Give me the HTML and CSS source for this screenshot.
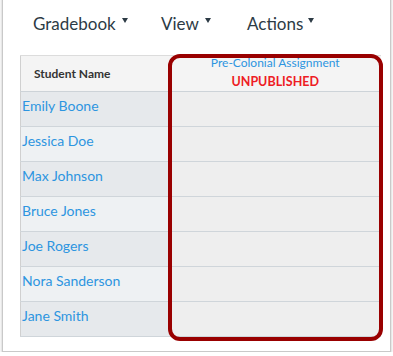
FILE: index.html
```html
<!DOCTYPE html>
<html>
<head>
  <meta charset="utf-8">
  <title>Gradebook</title>
  <link rel="stylesheet" href="styles.css">
</head>
<body>
  <div class="window">
    <div class="menu">
      <span class="menu-item gradebook">Gradebook <span class="caret"></span></span>
      <span class="menu-item view">View <span class="caret"></span></span>
      <span class="menu-item actions">Actions<span class="caret"></span></span>
    </div>

    <div class="grid">
      <table>
        <tr class="head">
          <th class="name-col">Student Name</th>
          <th class="grade-col">
            <div class="assignment">Pre-Colonial Assignment</div>
            <div class="unpublished">UNPUBLISHED</div>
          </th>
        </tr>
        <tr class="dark"><td class="name"><a href="#">Emily Boone</a></td><td class="grade"></td></tr>
        <tr class="light"><td class="name"><a href="#">Jessica Doe</a></td><td class="grade"></td></tr>
        <tr class="dark"><td class="name"><a href="#">Max Johnson</a></td><td class="grade"></td></tr>
        <tr class="light"><td class="name"><a href="#">Bruce Jones</a></td><td class="grade"></td></tr>
        <tr class="dark"><td class="name"><a href="#">Joe Rogers</a></td><td class="grade"></td></tr>
        <tr class="light"><td class="name"><a href="#">Nora Sanderson</a></td><td class="grade"></td></tr>
        <tr class="dark"><td class="name"><a href="#">Jane Smith</a></td><td class="grade"></td></tr>
      </table>
      <div class="highlight"></div>
    </div>
  </div>
</body>
</html>
```

FILE: styles.css
```css
body {
  margin: 0;
  background: #fff;
  font-family: Lato, "Open Sans", sans-serif;
}

.window {
  margin: -10px 0 0 2px;
  width: 387px;
  height: 360px;
  border: 1px solid #c9c9c9;
  box-shadow: 0 2px 3px rgba(0, 0, 0, 0.25);
  background: #fff;
}

.menu {
  display: flex;
  align-items: center;
  height: 44px;
  margin-top: 10px;
  padding-left: 30px;
  font-size: 17px;
  color: #2d3b45;
}

.menu-item {
  display: flex;
  align-items: center;
}

.gradebook { width: 128px; }
.view { width: 86px; }

.caret {
  display: inline-block;
  width: 0;
  height: 0;
  margin-left: 6px;
  margin-bottom: 5px;
  border-left: 3.5px solid transparent;
  border-right: 3.5px solid transparent;
  border-top: 5px solid #2d3b45;
}

.actions .caret { margin-left: 5px; }

.grid {
  position: relative;
  margin: 10px 0 0 17px;
  width: 361px;
}

table {
  border-collapse: collapse;
  width: 361px;
  table-layout: fixed;
}

th, td {
  padding: 0;
  box-sizing: border-box;
}

tr.head th {
  height: 36px;
  background: #f4f4f4;
  border-top: 1px solid #dcdcdc;
  border-bottom: 1px solid #cdd3d8;
  vertical-align: middle;
}

.name-col {
  width: 149px;
  border-left: 1px solid #d0d0d0;
  text-align: left;
  padding-left: 13px;
  font-size: 12px;
  font-weight: bold;
  color: #333;
}

.grade-col {
  text-align: center;
  font-weight: normal;
}

.assignment {
  font-size: 12px;
  color: #2d95e0;
  margin-top: -4px;
}

.unpublished {
  margin-top: 4px;
  font-size: 12.5px;
  font-weight: bold;
  color: #ee1c25;
}

td {
  height: 35px;
  border-bottom: 1px solid #cfd5da;
  vertical-align: top;
}

td.name {
  border-left: 1px solid #d0d0d0;
  padding: 5px 0 0 1px;
  font-size: 14px;
}

td.name a {
  color: #2d95e0;
  text-decoration: none;
}

tr.dark td.name { background: #e6e9ec; }
tr.light td.name { background: #eef1f3; }

td.grade {
  background: #eeeeee;
}

.highlight {
  position: absolute;
  left: 148px;
  top: -1px;
  width: 207px;
  height: 279px;
  border: 4px solid #990000;
  border-radius: 12px;
}
```
